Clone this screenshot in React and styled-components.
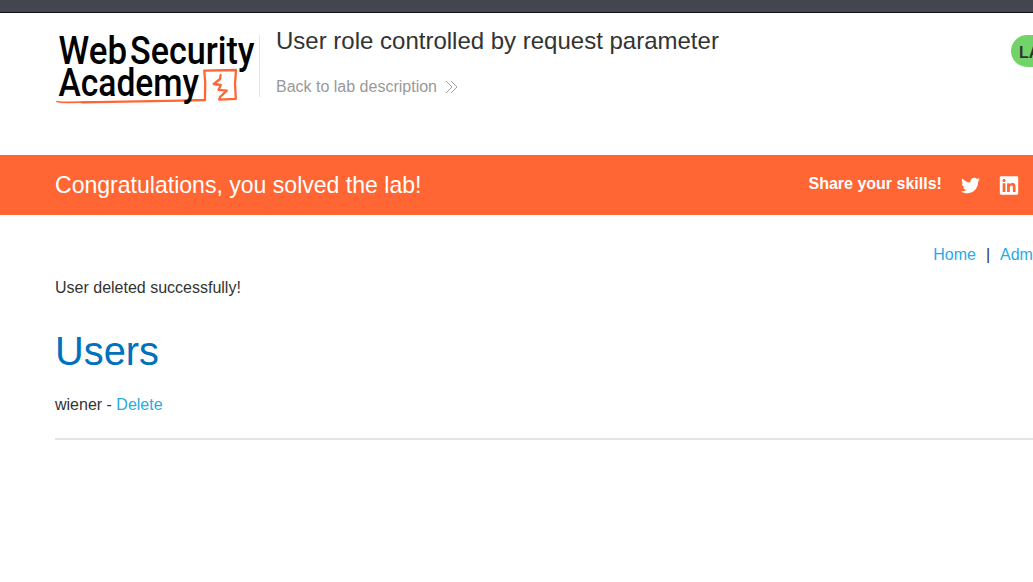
import React from "react";
import styled, { createGlobalStyle } from "styled-components";
import { FaTwitter, FaLinkedin } from "react-icons/fa";

const GlobalStyle = createGlobalStyle`
  * { box-sizing: border-box; }
  html, body { margin: 0; background: #fff; overflow: hidden; }
  body {
    font-family: "Liberation Sans", Arial, Helvetica, sans-serif;
    font-size: 16px;
    line-height: 20px;
    color: #333332;
  }
`;

const Page = styled.div`
  height: 100vh;
  overflow: hidden;
`;

const TopBar = styled.div`
  height: 13px;
  background: #44464f;
  border-bottom: 1px solid #111217;
`;

const Container = styled.div`
  width: 1170px;
  padding-left: 55px;
`;

const Header = styled(Container)`
  display: flex;
  align-items: flex-start;
  height: 142px;
  padding-top: 13px;
`;

const Logo = styled.svg`
  flex: none;
  width: 205px;
  height: 84px;
`;

const TitleBlock = styled.div`
  flex: none;
  height: 62px;
  width: 752px;
  margin-top: 9px;
  margin-left: -1px;
  padding-left: 16px;
  border-left: 1px solid #e4e4e4;
`;

const Title = styled.h2`
  margin: -10px 0 0;
  font-size: 24px;
  line-height: 32px;
  font-weight: 400;
  white-space: nowrap;
`;

const BackLink = styled.a`
  display: flex;
  align-items: center;
  margin-top: 20px;
  color: #999;
`;

const Chevrons = styled.svg`
  width: 13px;
  height: 14px;
  margin: -1px 0 0 8px;
`;

const LabBadge = styled.span`
  flex: none;
  height: 32px;
  margin-top: 9px;
  padding: 0 12px 0 8px;
  border-radius: 16px;
  background: #73d36b;
  font-weight: 700;
  line-height: 35px;
`;

const Banner = styled.section`
  height: 60px;
  background: #ff6633;
  color: #fff;
`;

const BannerRow = styled(Container)`
  display: flex;
  align-items: center;
  height: 60px;
`;

const BannerTitle = styled.h4`
  width: 753.5px;
  margin: 0;
  font-size: 23.06px;
  line-height: 30px;
  font-weight: 400;
`;

const ShareLabel = styled.span`
  width: 152px;
  padding-bottom: 2px;
  font-weight: 700;
`;

const ShareIcon = styled.span`
  display: flex;
  justify-content: center;
  width: 20px;
  margin-right: 18.5px;
`;

const Nav = styled.nav`
  display: flex;
  gap: 10px;
  margin-top: 30px;
  padding-left: 878.2px;
`;

const Link = styled.a`
  color: #29abe2;
`;

const Message = styled.p`
  margin: 13px 0 0;
`;

const Heading = styled.h1`
  margin: 29px 0 0;
  font-size: 39.8px;
  line-height: 48px;
  font-weight: 400;
  color: #0071bc;
`;

const UserRow = styled.div`
  margin-top: 20px;
`;

const Rule = styled.hr`
  height: 2px;
  margin: 23px 0 0;
  border: 0;
  background: #e4e4e4;
`;

const LogoText = styled.text`
  font-family: Roboto, "Liberation Sans", sans-serif;
  font-size: 38px;
  font-weight: 500;
  fill: #000;
`;

function AcademyLogo() {
  return (
    <Logo viewBox="55 26 205 84" aria-label="Web Security Academy">
      <g fill="none" stroke="#ff6633" strokeWidth="2.3" strokeLinecap="round" strokeLinejoin="round">
        <path d="M82 102.3L181 100.7L205 100L205.2 82L204.3 70.6L236 70L235 84L235.8 98.8L219.2 99.7L220 97L226.8 90.6L218.6 89.8L220.8 85L213.8 84L220 79L220.6 75.2" />
        <path d="M57 101.5Q61 102.6 69 102.4L95 101.8" strokeWidth="1.7" />
      </g>
      <LogoText x="58.5" y="63.5" textLength="68.5" lengthAdjust="spacingAndGlyphs">Web</LogoText>
      <LogoText x="130" y="63.5" textLength="124.5" lengthAdjust="spacingAndGlyphs">Security</LogoText>
      <LogoText x="58.5" y="96" textLength="140.5" lengthAdjust="spacingAndGlyphs">Academy</LogoText>
    </Logo>
  );
}

export default function App() {
  return (
    <Page>
      <GlobalStyle />
      <TopBar />
      <Header as="header">
        <AcademyLogo />
        <TitleBlock>
          <Title>User role controlled by request parameter</Title>
          <BackLink>
            Back to lab description
            <Chevrons viewBox="0 0 13 14" fill="none" stroke="#999" strokeWidth="0.9">
              <path d="M1 1l6 6-6 6M6 1l6 6-6 6" />
            </Chevrons>
          </BackLink>
        </TitleBlock>
        <LabBadge>LAB</LabBadge>
      </Header>
      <Banner>
        <BannerRow>
          <BannerTitle>Congratulations, you solved the lab!</BannerTitle>
          <ShareLabel>Share your skills!</ShareLabel>
          <ShareIcon><FaTwitter size={19} /></ShareIcon>
          <ShareIcon><FaLinkedin size={21} /></ShareIcon>
        </BannerRow>
      </Banner>
      <Container as="main">
        <Nav>
          <Link>Home</Link>
          <span>|</span>
          <Link>Admin panel</Link>
        </Nav>
        <Message>User deleted successfully!</Message>
        <Heading>Users</Heading>
        <UserRow>wiener - <Link>Delete</Link></UserRow>
        <Rule />
      </Container>
    </Page>
  );
}
